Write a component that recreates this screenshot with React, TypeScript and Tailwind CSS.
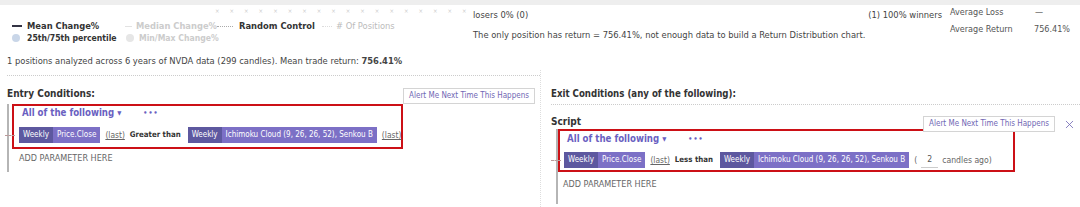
import { X } from 'lucide-react';

const font = { fontFamily: '"DejaVu Sans Condensed", "DejaVu Sans", Verdana, sans-serif' };

function Chip({ tf, name }: { tf: string; name: string }) {
  return (
    <span className="flex h-[16px] items-stretch text-[8px] text-white">
      <span className="flex items-center bg-[#5d589f] px-[4px]">{tf}</span>
      <span className="flex items-center bg-[#7c70c6] px-[4px]">{name}</span>
    </span>
  );
}

function Last() {
  return <span className="text-[8.4px] text-[#666] underline">(last)</span>;
}

function GroupHead() {
  return (
    <div className="flex h-[14px] items-center gap-[22px] leading-[14px]">
      <span className="text-[9.6px] font-bold text-[#6a5fc1]">
        All of the following <span className="align-top text-[6px]">▼</span>
      </span>
      <span className="text-[7px] font-bold tracking-[1px] text-[#6a5fc1]">•••</span>
    </div>
  );
}

function AlertButton() {
  return (
    <button className="h-[16px] shrink-0 border border-[#d4d4d4] bg-white px-[5px] text-[8px] leading-none text-[#7067b4]">
      Alert Me Next Time This Happens
    </button>
  );
}

function Legend() {
  return (
    <div className="flex flex-col pl-[12px] font-bold leading-[12px]">
      <div className="flex items-center text-[9.3px]">
        <span className="flex w-[113px] items-center gap-[5px] text-[#333]">
          <span className="h-[2px] w-[10px] bg-[#334]" />
          Mean Change%
        </span>
        <span className="flex w-[92px] items-center gap-[4px] text-[#ccc]">
          <span className="h-[1px] w-[10px] bg-[#e2e2e2]" />
          Median Change%
        </span>
        <span className="flex w-[105px] items-center gap-[6px] text-[#333]">
          <span className="w-[16px] border-t border-dotted border-[#aaa]" />
          Random Control
        </span>
        <span className="flex items-center gap-[4px] font-normal text-[#bbb]">
          <span className="w-[10px] border-t border-dotted border-[#ddd]" />
          # Of Positions
        </span>
      </div>
      <div className="flex items-center text-[8.6px]">
        <span className="flex w-[114px] items-center gap-[7px] text-[#333]">
          <span className="h-[8px] w-[8px] rounded-full bg-[#c9d6e8]" />
          25th/75th percentile
        </span>
        <span className="flex items-center gap-[5px] text-[#ccc]">
          <span className="h-[8px] w-[8px] rounded-full bg-[#e6e6e6]" />
          Min/Max Change%
        </span>
      </div>
    </div>
  );
}

export default function App() {
  return (
    <div className="h-[207px] w-[1080px] overflow-hidden whitespace-nowrap bg-white text-[#333]" style={font}>
      <div className="flex h-[70px]">
        <div className="flex w-[466px] flex-col">
          <div className="h-[5px] bg-[#eeeeee]" />
          <div className="flex h-[10px] items-center gap-[10px] pl-[215px] text-[6px] text-[#ccc]">
            {Array.from({ length: 18 }).map((_, i) => (
              <span key={i}>×</span>
            ))}
          </div>
          <div className="pt-[5px]">
            <Legend />
          </div>
          <div className="mt-[11px] pl-[7px] text-[9.3px] leading-[12px] text-[#444]">
            1 positions analyzed across 6 years of NVDA data (299 candles). Mean trade return:{' '}
            <span className="font-bold">756.41%</span>
          </div>
        </div>
        <div className="flex flex-1 flex-col">
          <div className="h-[5px] bg-[#eeeeee]" />
          <div className="flex flex-1">
            <div className="flex flex-1 flex-col pl-[7px] text-[9.3px] leading-[12px] text-[#444]">
              <div className="flex pt-[4px] pr-[8px]">
                <span>losers 0% (0)</span>
                <span className="ml-auto">(1) 100% winners</span>
              </div>
              <div className="pt-[8px]">
                The only position has return = 756.41%, not enough data to build a Return Distribution chart.
              </div>
            </div>
            <div className="grid w-[130px] grid-cols-[84px_1fr] content-start gap-y-[5px] pt-[1px] text-[9px] leading-[12px] text-[#555]">
              <span>Average Loss</span>
              <span className="pl-[1px]">—</span>
              <span>Average Return</span>
              <span>756.41%</span>
            </div>
          </div>
        </div>
      </div>

      <div className="flex h-[137px]">
        <div className="w-[540px] pt-[5px]">
          <div className="ml-[7px] border-t border-dotted border-[#ccc]" />
          <div className="flex items-end justify-between pt-[12px] pr-[5px] pl-[7px]">
            <span className="pb-[4px] text-[10px] leading-[12px] font-bold text-[#333]">Entry Conditions:</span>
            <AlertButton />
          </div>
          <div className="ml-[7px] border-l-2 border-[#b5b5b5]">
            <div className="ml-[3px] w-[391px] border-2 border-[#cc1016] pb-[4px] pl-[5px]">
              <div className="pl-[3px]">
                <GroupHead />
              </div>
              <div className="relative mt-[7px] flex items-center gap-[5px]">
                <span className="absolute top-[8px] -left-[14px] w-[10px] border-t border-dashed border-[#b99]" />
                <Chip tf="Weekly" name="Price.Close" />
                <Last />
                <span className="pr-[2px] text-[7.8px] font-bold text-[#333]">Greater than</span>
                <Chip tf="Weekly" name="Ichimoku Cloud (9, 26, 26, 52), Senkou B" />
                <Last />
              </div>
            </div>
            <div className="pt-[3px] pb-[8px] pl-[10px] text-[9px] leading-[12px] text-[#666]">ADD PARAMETER HERE</div>
          </div>
        </div>

        <div className="flex-1 border-l border-dotted border-[#ddd] pl-[10px]">
          <div className="pt-[18px] text-[9.6px] leading-[12px] font-bold text-[#333]">
            Exit Conditions (any of the following):
          </div>
          <div className="mt-[4px] border-t border-dotted border-[#ccc]" />
          <div className="relative z-10 flex h-[24px] items-start justify-between pt-[11px] pr-[4px]">
            <span className="text-[10px] leading-[12px] font-bold text-[#333]">Script</span>
            <div className="flex items-start gap-[8px]">
              <AlertButton />
              <X className="mt-[2px] h-[13px] w-[13px] text-[#7067b4]" strokeWidth={1.5} />
            </div>
          </div>
          <div className="ml-[5px] border-l-2 border-[#b5b5b5]">
            <div className="w-[457px] border-2 border-[#cc1016] pt-[1px] pb-[2px] pl-[4px]">
              <div className="pl-[3px]">
                <GroupHead />
              </div>
              <div className="relative mt-[6px] flex items-center gap-[5px]">
                <span className="absolute top-[8px] -left-[13px] w-[10px] border-t border-dashed border-[#b99]" />
                <Chip tf="Weekly" name="Price.Close" />
                <Last />
                <span className="pr-[2px] text-[7.8px] font-bold text-[#333]">Less than</span>
                <Chip tf="Weekly" name="Ichimoku Cloud (9, 26, 26, 52), Senkou B" />
                <span className="flex items-center gap-[4px] text-[8.6px] text-[#666]">
                  (
                  <span className="flex h-[16px] w-[17px] items-center justify-center border-b border-[#ccc] text-[#555]">2</span>
                  candles ago)
                </span>
              </div>
            </div>
            <div className="pt-[6px] pb-[14px] pl-[5px] text-[9px] leading-[12px] text-[#666]">ADD PARAMETER HERE</div>
          </div>
        </div>
      </div>
    </div>
  );
}
